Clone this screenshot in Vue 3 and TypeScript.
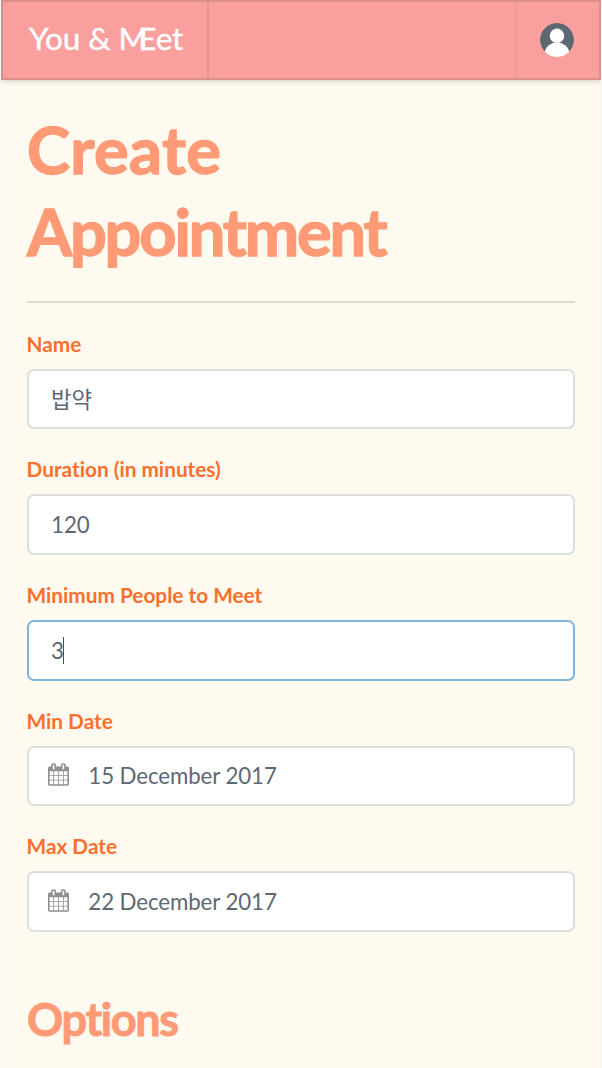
<script setup lang="ts">
interface Field {
  label: string
  value: string
  kind: 'text' | 'date'
  focused?: boolean
}

const fields: Field[] = [
  { label: 'Name', value: '밥약', kind: 'text' },
  { label: 'Duration (in minutes)', value: '120', kind: 'text' },
  { label: 'Minimum People to Meet', value: '3', kind: 'text', focused: true },
  { label: 'Min Date', value: '15 December 2017', kind: 'date' },
  { label: 'Max Date', value: '22 December 2017', kind: 'date' },
]
</script>

<template>
  <div class="page">
    <header class="menu">
      <div class="brand">You &amp; <span class="m">M</span>Eet</div>
      <div class="account">
        <svg width="34" height="34" viewBox="0 0 34 34">
          <defs><clipPath id="disc"><circle cx="17" cy="17" r="17" /></clipPath></defs>
          <g clip-path="url(#disc)">
            <circle cx="17" cy="17" r="17" fill="#5d6872" />
            <ellipse cx="17" cy="31" rx="12.4" ry="11.5" fill="#fff" />
            <circle cx="17" cy="12.8" r="7.2" fill="#fff" />
          </g>
        </svg>
      </div>
    </header>
    <main class="content">
      <h1><span class="create">Create</span><br /><span class="appointment">Appointment</span></h1>
      <div class="divider"></div>
      <div v-for="field in fields" :key="field.label" class="field">
        <label>{{ field.label }}</label>
        <div class="input" :class="{ focused: field.focused }">
          <svg v-if="field.kind === 'date'" class="calendar" viewBox="0 0 1664 1792">
            <path d="M128 1664h288v-288h-288v288zm352 0h320v-288h-320v288zm-352-352h288v-320h-288v320zm352 0h320v-320h-320v320zm-352-384h288v-288h-288v288zm736 736h320v-288h-320v288zm-384-736h320v-288h-320v288zm768 736h288v-288h-288v288zm-384-352h320v-320h-320v320zm-352-864v-288q0-13-9.5-22.5t-22.5-9.5h-64q-13 0-22.5 9.5t-9.5 22.5v288q0 13 9.5 22.5t22.5 9.5h64q13 0 22.5-9.5t9.5-22.5zm736 864h288v-320h-288v320zm-384-384h320v-288h-320v288zm384 0h288v-288h-288v288zm32-480v-288q0-13-9.5-22.5t-22.5-9.5h-64q-13 0-22.5 9.5t-9.5 22.5v288q0 13 9.5 22.5t22.5 9.5h64q13 0 22.5-9.5t9.5-22.5zm384-64v1280q0 52-38 90t-90 38h-1408q-52 0-90-38t-38-90v-1280q0-52 38-90t90-38h128v-96q0-66 47-113t113-47h64q66 0 113 47t47 113v96h384v-96q0-66 47-113t113-47h64q66 0 113 47t47 113v96h128q52 0 90 38t38 90z" />
          </svg>
          <span>{{ field.value }}</span><i v-if="field.focused" class="caret"></i>
        </div>
      </div>
      <h2>Options</h2>
    </main>
  </div>
</template>

<style>
body {
  background: #f5f5f3;
}
</style>

<style scoped>
.page {
  box-sizing: border-box;
  width: 600px;
  height: 1068px;
  margin-left: 1px;
  overflow: hidden;
  background: #fffaef;
  font-family: Lato, 'Noto Sans CJK KR', sans-serif;
  font-variant-ligatures: none;
  color: #5d6872;
}
.menu {
  box-sizing: border-box;
  display: flex;
  justify-content: space-between;
  height: 80px;
  border: 2px solid #dc8e8d;
  background: #f99f9e;
  box-shadow: 0 2px 4px rgba(34, 36, 38, 0.15);
}
.brand {
  box-sizing: border-box;
  width: 206px;
  padding-left: 26px;
  border-right: 2px solid #e59392;
  color: #fff;
  font-size: 31.5px;
  line-height: 73px;
  letter-spacing: -0.1px;
  -webkit-text-stroke: 0.4px #fff;
  white-space: pre;
}
.m {
  letter-spacing: -9.5px;
}
.account {
  box-sizing: border-box;
  display: flex;
  align-items: center;
  width: 84px;
  padding-left: 24px;
  border-left: 1px solid #e59392;
}
.content {
  padding: 0 26px;
}
h1,
h2 {
  margin: 0;
  color: #ff9a76;
  font-weight: 700;
}
h1 {
  height: 221px;
  box-sizing: border-box;
  padding-top: 28px;
  font-size: 65px;
  line-height: 82px;
  -webkit-text-stroke: 1.4px #ff9a76;
}
.create {
  letter-spacing: 0.4px;
}
.appointment {
  letter-spacing: -2.2px;
}
.divider {
  height: 2px;
  background: #dedbcd;
  margin-bottom: 26.75px;
}
.field {
  box-sizing: border-box;
  height: 125.6px;
}
label {
  display: block;
  height: 26px;
  margin-bottom: 13px;
  color: #f8702c;
  font-size: 20.8px;
  font-weight: 700;
  line-height: 27.8px;
  text-indent: -0.5px;
  white-space: nowrap;
}
.input {
  box-sizing: border-box;
  display: flex;
  align-items: center;
  height: 60.7px;
  padding-left: 22px;
  border: 2px solid #dcdfe0;
  border-radius: 7px;
  background: #fff;
  font-size: 22.3px;
  line-height: 28px;
  white-space: nowrap;
}
.input span {
  padding-top: 1px;
}
.input.focused {
  border-color: #80b5db;
}
.caret {
  width: 1px;
  height: 27px;
  margin-left: -0.5px;
  background: #45505a;
}
.calendar {
  width: 21px;
  height: 23px;
  margin: -2px 19.3px 0 -3px;
  fill: #909090;
}
.calendar + span {
  letter-spacing: -0.1px;
}
h2 {
  padding-top: 31px;
  font-size: 45px;
  line-height: 60px;
  letter-spacing: -1.4px;
  -webkit-text-stroke: 0.9px #ff9a76;
}
</style>
